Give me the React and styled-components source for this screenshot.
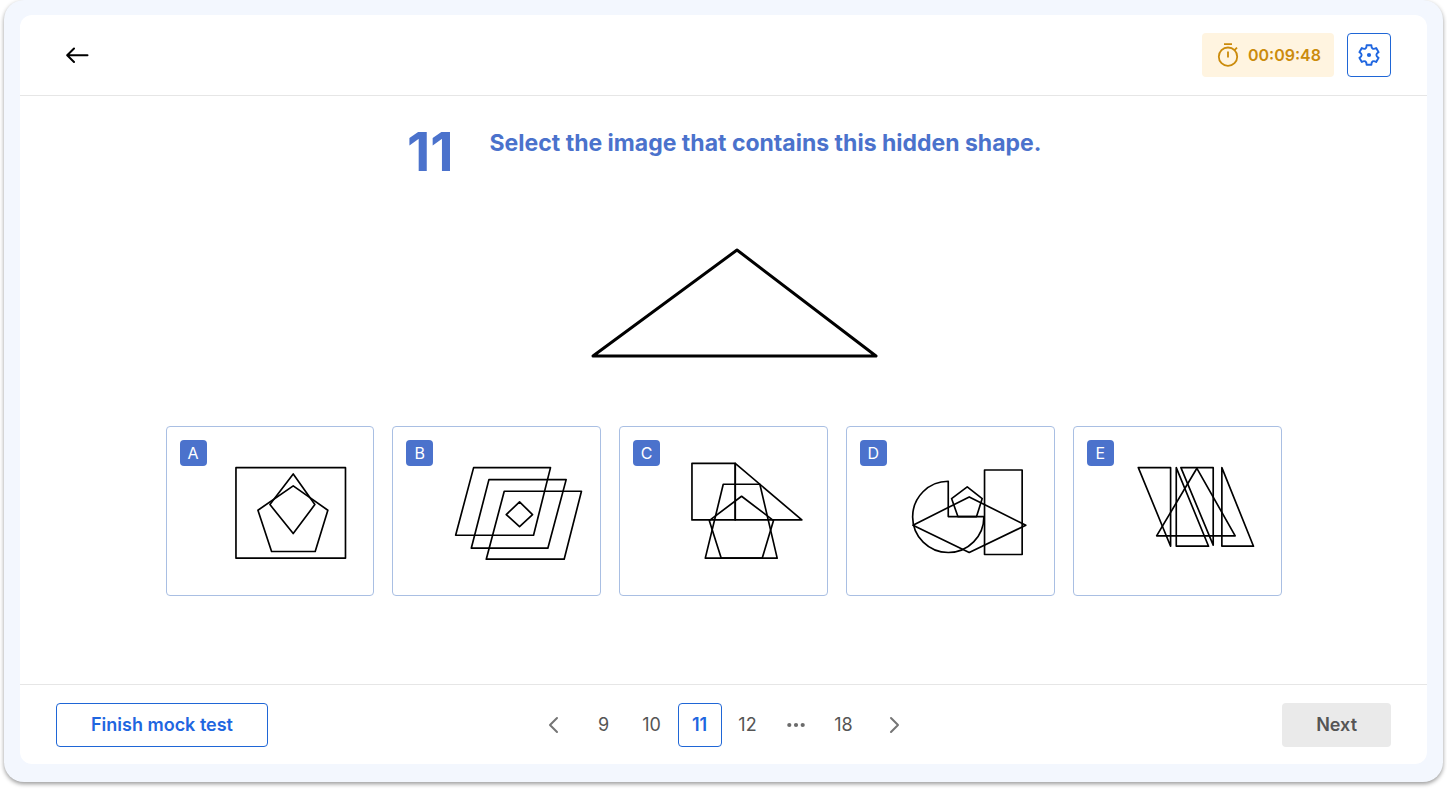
import React, { useEffect, useState } from 'react'
import styled, { createGlobalStyle, css } from 'styled-components'

const figures = [
  {
    letter: 'A',
    drawing: (
      <>
        <rect x="229" y="143" width="329" height="272" />
        <path d="M401 162L466 254L401 341L331 254Z" />
        <path d="M401 198L505 271L467 395H336L295 271Z" />
      </>
    ),
  },
  {
    letter: 'B',
    drawing: (
      <>
        <path d="M264 143H495L444 346H210Z" />
        <path d="M310 179H542L487 385H257Z" />
        <path d="M356 214H588L536 418H302Z" />
        <path d="M402 246L441 284L402 320L362 284Z" />
      </>
    ),
  },
  {
    letter: 'C',
    drawing: (
      <>
        <path d="M238 130H368V300H238Z" />
        <path d="M368 130L568 300H368Z" />
        <path d="M332 193H442L494 415H278Z" />
        <path d="M387 229L483 302L449 415H326L290 302Z" />
      </>
    ),
  },
  {
    letter: 'D',
    drawing: (
      <>
        <rect x="435" y="150" width="113" height="254" />
        <path d="M326 184V290H433A107 107 0 1 1 326 184Z" />
        <path d="M389 231L559 316L389 398L220 316Z" />
        <path d="M383 201L428 236L411 290H355L336 236Z" />
      </>
    ),
  },
  {
    letter: 'E',
    drawing: (
      <>
        <path d="M215 143H312V379Z" />
        <path d="M329 143L426 379H329Z" />
        <path d="M343 143H440V376Z" />
        <path d="M391 145L506 348H270Z" />
        <path d="M466 143L561 379H466Z" />
      </>
    ),
  },
]

const pages = ['9', '10', '11', '12', '...', '18']

const App = () => {
  const [selected, setSelected] = useState(null)

  useEffect(() => {
    document.title = 'Mock test'
  })

  return (
    <>
      <GlobalStyle />
      <Frame>
        <Panel>
          <Header>
            <IconButton aria-label="Back">
              <ArrowIcon />
            </IconButton>
            <Tools>
              <Timer>
                <StopwatchIcon />
                <time>00:09:48</time>
              </Timer>
              <IconButton $outlined aria-label="Settings">
                <GearIcon />
              </IconButton>
            </Tools>
          </Header>
          <Main>
            <Question>
              <Number>11</Number>
              <Title>Select the image that contains this hidden shape.</Title>
            </Question>
            <Shape viewBox="1 0 312 120" role="img" aria-label="Triangle">
              <path d="M170 10L309 116H26Z" />
            </Shape>
            <Options>
              {figures.map(({ letter, drawing }) => (
                <Option
                  key={ letter }
                  $selected={ selected === letter }
                  aria-pressed={ selected === letter }
                  onClick={ () => setSelected(letter) }
                >
                  <Letter>{ letter }</Letter>
                  <Drawing viewBox="142 60 462 426" aria-hidden="true">
                    { drawing }
                  </Drawing>
                </Option>
              ))}
            </Options>
          </Main>
          <Footer>
            <FinishButton>Finish mock test</FinishButton>
            <Pagination aria-label="Questions">
              <PageButton aria-label="Previous">
                <ChevronIcon d="M15 5L8 12L15 19" />
              </PageButton>
              <Pages>
                {pages.map(page => page === '...'
                  ? <Ellipsis key={ page }><DotsIcon /></Ellipsis>
                  : (
                    <PageButton
                      key={ page }
                      $current={ page === '11' }
                      aria-current={ page === '11' ? 'page' : undefined }
                    >
                      { page }
                    </PageButton>
                  )
                )}
              </Pages>
              <PageButton aria-label="Following">
                <ChevronIcon d="M9 5L16 12L9 19" />
              </PageButton>
            </Pagination>
            <NextButton disabled>Next</NextButton>
          </Footer>
        </Panel>
      </Frame>
    </>
  )
}

export default App

const ArrowIcon = () => (
  <svg width="24" height="24" viewBox="0 0 24 24" fill="none" stroke="#000" strokeWidth="2" strokeLinecap="round" strokeLinejoin="round">
    <path d="M21.5 12.3H1.5M8 5.5L1.2 12.3L8 19" />
  </svg>
)

const StopwatchIcon = () => (
  <svg width="24" height="24" viewBox="0 0 24 24" fill="none" stroke="currentColor" strokeWidth="1.8">
    <circle cx="13" cy="13.7" r="9.2" />
    <path d="M9 1.2H17M13 8.5V14.5M19 7.7L22 4.7" />
  </svg>
)

const GearIcon = () => (
  <svg width="24" height="24" viewBox="0 0 24 24" fill="none" stroke="currentColor" strokeWidth="1.9" strokeLinejoin="round">
    <path d="M9.6 2.2H14.4C14.3 5.7 16.3 6.9 19.2 5L21.6 9.2C18.6 10.8 18.6 13.2 21.6 14.8L19.2 19C16.3 17.1 14.3 18.3 14.4 21.8H9.6C9.7 18.3 7.7 17.1 4.8 19L2.4 14.8C5.4 13.2 5.4 10.8 2.4 9.2L4.8 5C7.7 6.9 9.7 5.7 9.6 2.2Z" />
    <circle cx="12" cy="12" r="2.1" fill="currentColor" stroke="none" />
  </svg>
)

const ChevronIcon = ({ d }) => (
  <svg width="24" height="24" viewBox="0 0 24 24" fill="none" stroke="#757575" strokeWidth="2" strokeLinecap="round" strokeLinejoin="round">
    <path d={ d } />
  </svg>
)

const DotsIcon = () => (
  <svg width="24" height="24" viewBox="0 0 24 24" fill="#6b6b6b">
    <circle cx="5.3" cy="12" r="2.1" />
    <circle cx="12" cy="12" r="2.1" />
    <circle cx="18.7" cy="12" r="2.1" />
  </svg>
)

const GlobalStyle = createGlobalStyle`
  * {
    box-sizing: border-box;
  }

  body {
    margin: 0;
    background: #fff;
    font-family: Inter, "Liberation Sans", sans-serif;
  }

  button {
    font-family: inherit;
    cursor: pointer;
  }

  svg {
    display: block;
    flex: none;
  }
`

const Frame = styled.div`
  display: flex;
  min-height: calc(100vh - 8px);
  margin: 0 4px 8px;
  padding: 15px 16px 18px;
  border-radius: 20px;
  background: #f3f7fe;
  box-shadow: 0 2px 4px rgba(0, 0, 0, 0.4);
`

const Panel = styled.div`
  flex: 1;
  display: flex;
  flex-direction: column;
  border-radius: 12px;
  background: #fff;
`

const Header = styled.header`
  display: flex;
  align-items: center;
  justify-content: space-between;
  height: 81px;
  padding: 0 36px;
  border-bottom: 1px solid #e6e6e6;
`

const Tools = styled.div`
  display: flex;
  gap: 13px;
`

const Timer = styled.div`
  display: flex;
  align-items: center;
  gap: 9px;
  height: 44px;
  padding: 0 13px;
  border-radius: 4px;
  background: #fff4e0;
  color: #cb8b0c;
  font-size: 16px;
  font-weight: 600;
`

const IconButton = styled.button`
  display: flex;
  align-items: center;
  justify-content: center;
  width: 44px;
  height: 44px;
  padding: 0;
  border: 1px solid ${({ $outlined }) => $outlined ? '#1f66d6' : 'transparent'};
  border-radius: 4px;
  background: none;
  color: #1f66e0;
`

const Main = styled.main`
  flex: 1;
  display: flex;
  flex-direction: column;
  align-items: center;
  padding: 28px 36px;
`

const Question = styled.div`
  display: flex;
  align-items: flex-start;
  gap: 36px;
  color: #4b72cc;
`

const Number = styled.div`
  min-width: 48px;
  font-size: 54px;
  font-weight: 700;
  font-kerning: none;
  line-height: 56px;
  text-align: right;
`

const Title = styled.h1`
  margin: 0;
  font-size: 23px;
  font-weight: 700;
  line-height: 38px;
`

const Shape = styled.svg`
  width: 312px;
  margin: 60px 0 66px;
  fill: none;
  stroke: #000;
  stroke-width: 3;
  stroke-linejoin: round;
`

const Options = styled.div`
  display: grid;
  grid-template-columns: repeat(5, 1fr);
  gap: 18px;
  width: 100%;
  max-width: 1116px;
`

const Option = styled.button`
  display: flex;
  align-items: flex-start;
  padding: 13px;
  border: 1px solid #a9bfe3;
  border-radius: 4px;
  background: #fff;

  ${({ $selected }) => $selected && css`
    background: #f3f7fe;
    border-color: #1f66e0;
  `}
`

const Letter = styled.span`
  flex: none;
  width: 27px;
  border-radius: 4px;
  background: #4b72cc;
  color: #fff;
  font-size: 16px;
  line-height: 26px;
  text-align: center;
`

const Drawing = styled.svg`
  flex: 1;
  min-width: 0;
  fill: none;
  stroke: #000;
  stroke-width: 5;
  stroke-linejoin: round;
`

const Footer = styled.footer`
  display: grid;
  grid-template-columns: 1fr auto 1fr;
  align-items: center;
  height: 80px;
  padding: 0 36px;
  border-top: 1px solid #e6e6e6;
`

const Button = styled.button`
  height: 44px;
  padding: 0 34px;
  border: 0;
  border-radius: 4px;
  font-size: 18px;
  font-weight: 600;
`

const FinishButton = styled(Button)`
  justify-self: start;
  border: 1px solid #1f66d6;
  background: #fff;
  color: #1f66e0;
`

const NextButton = styled(Button)`
  justify-self: end;
  background: #eaeaea;
  color: #555;
`

const Pagination = styled.nav`
  display: flex;
  gap: 6px;
`

const Pages = styled.div`
  display: flex;
  gap: 4px;
`

const PageButton = styled.button`
  display: flex;
  align-items: center;
  justify-content: center;
  width: 44px;
  height: 44px;
  padding: 0;
  border: 1px solid transparent;
  border-radius: 4px;
  background: none;
  color: #555;
  font-size: 18px;

  ${({ $current }) => $current && css`
    border-color: #1f66d6;
    color: #1f66e0;
    font-weight: 600;
  `}
`

const Ellipsis = styled.span`
  display: flex;
  align-items: center;
  justify-content: center;
  width: 44px;
`
